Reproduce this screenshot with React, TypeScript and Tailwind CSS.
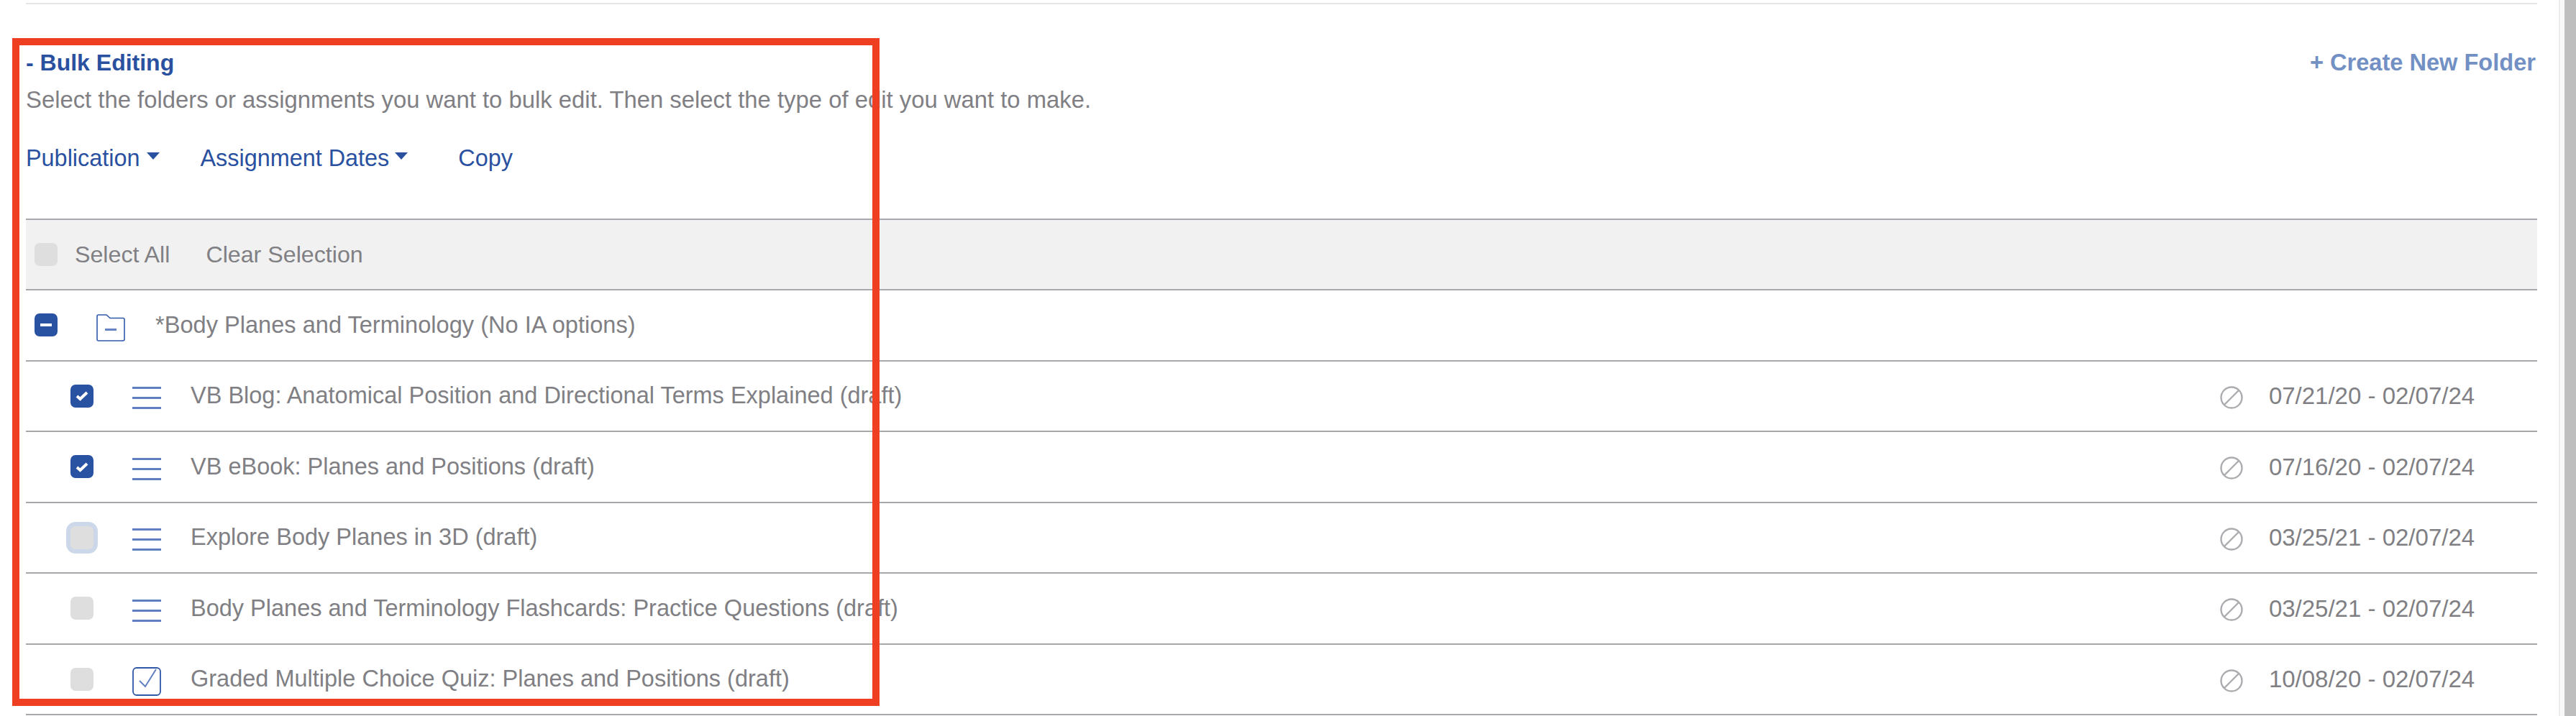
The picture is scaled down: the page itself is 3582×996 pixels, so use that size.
import { Fragment } from 'react';

type Row = {
  title: string;
  dates?: string;
  kind: 'folder' | 'page' | 'quiz';
  state: 'partial' | 'checked' | 'focus' | 'off';
};

const rows: Row[] = [
  { title: '*Body Planes and Terminology (No IA options)', kind: 'folder', state: 'partial' },
  { title: 'VB Blog: Anatomical Position and Directional Terms Explained (draft)', dates: '07/21/20 - 02/07/24', kind: 'page', state: 'checked' },
  { title: 'VB eBook: Planes and Positions (draft)', dates: '07/16/20 - 02/07/24', kind: 'page', state: 'checked' },
  { title: 'Explore Body Planes in 3D (draft)', dates: '03/25/21 - 02/07/24', kind: 'page', state: 'focus' },
  { title: 'Body Planes and Terminology Flashcards: Practice Questions (draft)', dates: '03/25/21 - 02/07/24', kind: 'page', state: 'off' },
  { title: 'Graded Multiple Choice Quiz: Planes and Positions (draft)', dates: '10/08/20 - 02/07/24', kind: 'quiz', state: 'off' },
];

function Check({ state }: { state: Row['state'] }) {
  if (state === 'partial') {
    return (
      <div className="w-[32px] h-[32px] shrink-0 rounded-[7px] bg-[#2a52a2] flex items-center justify-center">
        <div className="w-[16px] h-[4px] bg-white" />
      </div>
    );
  }
  if (state === 'checked') {
    return (
      <div className="w-[32px] h-[32px] shrink-0 rounded-[7px] bg-[#2a52a2] flex items-center justify-center">
        <svg width="18" height="15" viewBox="0 0 18 15" fill="none">
          <path d="M2 8 L6.5 12 L16 3" stroke="white" strokeWidth="4" />
        </svg>
      </div>
    );
  }
  if (state === 'focus') {
    return <div className="w-[32px] h-[32px] shrink-0 rounded-[7px] bg-[#dedede] shadow-[0_0_0_6px_#ccd8ea]" />;
  }
  return <div className="w-[32px] h-[32px] shrink-0 rounded-[7px] bg-[#dedede]" />;
}

function KindIcon({ kind }: { kind: Row['kind'] }) {
  if (kind === 'folder') {
    return (
      <svg width="40" height="38" viewBox="0 0 40 38" fill="none" className="shrink-0 mt-[8px]">
        <path d="M1 3 Q1 1 3 1 H14 L19 5.5 H37 Q39 5.5 39 7.5 V35 Q39 37 37 37 H3 Q1 37 1 35 Z" stroke="#2f58a8" strokeWidth="1.6" />
        <path d="M12 21.5 H28" stroke="#6784c2" strokeWidth="3" />
      </svg>
    );
  }
  if (kind === 'quiz') {
    return (
      <svg width="40" height="40" viewBox="0 0 40 40" fill="none" className="shrink-0 mt-[6px]">
        <rect x="1" y="1" width="38" height="38" rx="5" stroke="#2f58a8" strokeWidth="1.8" />
        <path d="M10 19 L18 27 L33 3" stroke="#5f7fc0" strokeWidth="2" />
      </svg>
    );
  }
  return (
    <svg width="40" height="31" viewBox="0 0 40 31" fill="none" className="shrink-0 mt-[6px]">
      <path d="M0 1.5 H40 M0 15.5 H40 M0 29.5 H40" stroke="#5f7fc0" strokeWidth="3" />
    </svg>
  );
}

function Forbidden() {
  return (
    <svg width="32" height="32" viewBox="0 0 32 32" fill="none" className="shrink-0 mt-[4px]">
      <circle cx="16" cy="16" r="14.5" stroke="#acacb0" strokeWidth="2.4" />
      <path d="M6 26 L26 6" stroke="#acacb0" strokeWidth="2.4" />
    </svg>
  );
}

export default function App() {
  return (
    <div className="relative w-[3582px] h-[996px] overflow-hidden bg-white flex font-['Liberation_Sans',sans-serif] text-[32.5px] text-[#808084]">
      <div className="w-[3558px] shrink-0 pl-[36px] pr-[30px] pt-[4px]">
        <div className="h-[2px] bg-[#e5e5e7]" />

        {/* bulk edit heading */}
        <div className="mt-[58px] h-[46px] flex items-center justify-between">
          <span className="font-bold text-[32px] text-[#2a50a0]">- Bulk Editing</span>
          <span className="font-bold text-[32.6px] text-[#7390c4] pr-[2px]">+ Create New Folder</span>
        </div>
        <p className="mt-[6px] h-[46px] leading-[46px] text-[32.85px]">
          Select the folders or assignments you want to bulk edit. Then select the type of edit you want to make.
        </p>

        <div className="mt-[35px] h-[46px] flex items-center text-[32.4px] text-[#2a50a0]">
          <span>Publication</span>
          <span className="ml-[10px] mb-[6px] border-x-[9px] border-t-[10px] border-x-transparent border-t-[#2a50a0]" />
          <span className="ml-[56px]">Assignment Dates</span>
          <span className="ml-[8px] mb-[6px] border-x-[9px] border-t-[10px] border-x-transparent border-t-[#2a50a0]" />
          <span className="ml-[70px]">Copy</span>
        </div>

        {/* list */}
        <div className="mt-[61px] border-t-2 border-[#a7a7ac]">
          <div className="h-[98px] border-b-2 border-[#a7a7ac] bg-[#f1f1f1] flex items-center pl-[12px] text-[32.2px]">
            <Check state="off" />
            <span className="ml-[24px]">Select All</span>
            <span className="ml-[50px]">Clear Selection</span>
          </div>
          {rows.map((row) => (
            <Fragment key={row.title}>
              <div className={`h-[98.5px] border-b-2 border-[#a7a7ac] flex items-center ${row.kind === 'folder' ? 'pl-[12px]' : 'pl-[62px]'}`}>
                <Check state={row.state} />
                <div className="ml-[54px] flex">
                  <KindIcon kind={row.kind} />
                </div>
                <span className={row.kind === 'folder' ? 'ml-[42px] text-[32.6px]' : 'ml-[41px]'}>{row.title}</span>
                {row.dates && (
                  <div className="ml-auto flex items-center pr-[80px]">
                    <Forbidden />
                    <span className="w-[300px] ml-[29px] text-center text-[33px]">{row.dates}</span>
                  </div>
                )}
              </div>
            </Fragment>
          ))}
        </div>
      </div>

      {/* browser scrollbar */}
      <div className="flex-1 border-l-2 border-[#ececec] bg-[#f8f8f8] pl-[6px]">
        <div className="h-full bg-[#bebebe]" />
      </div>

      {/* annotation box drawn on top of the screenshot */}
      <div className="absolute left-[17px] top-[53px] w-[1206px] h-[929px] border-[10px] border-[#ee3f23] pointer-events-none" />
    </div>
  );
}
